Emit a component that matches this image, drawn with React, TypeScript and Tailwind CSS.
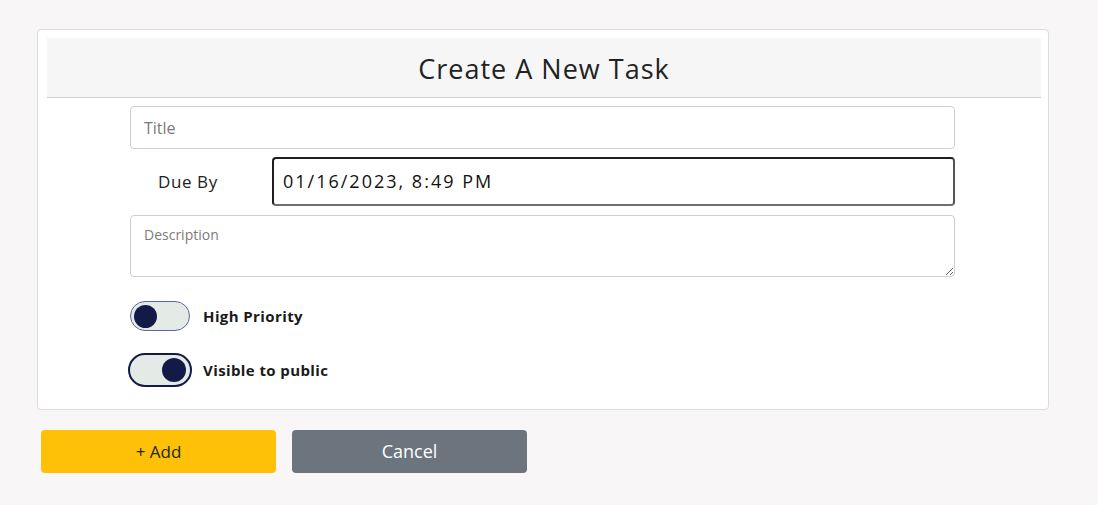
import { useState } from 'react'

export default function App() {
  const [highPriority, setHighPriority] = useState(false)
  const [isPublic, setIsPublic] = useState(true)

  return (
    <div
      className="min-h-[505px] w-full bg-[#f8f6f6] text-[#212529]"
      style={{ fontFamily: "'Open Sans', 'DejaVu Sans', sans-serif" }}
    >
      <div className="pl-[37px] pt-[29px] w-[1049px]">
        {/* Card */}
        <div className="bg-white border border-[#dcdcdc] rounded-[4px] px-[9px] pt-[8px] pb-[22px]">
          <div className="bg-[#f6f6f6] border-b border-[#cfcfcf] h-[60px] flex items-center justify-center pt-[3px] mr-[-2px]">
            <h1 className="text-[27px] tracking-[1px] text-[#222]">Create A New Task</h1>
          </div>

          <div className="pl-[83px] pr-[84px] pt-[8px] flex flex-col">
            <input
              placeholder="Title"
              className="h-[43px] w-full border border-[#cfcfcf] rounded-[4px] px-[13px] text-[16px] placeholder-[#7b7b7b] outline-none"
            />

            <div className="flex items-center mt-[8px]">
              <label className="w-[142px] pl-[28px] text-[17px] tracking-[0.6px] text-[#222]">Due By</label>
              <div className="flex-1 h-[49px] rounded-[4px] border-2 border-t-[#1f1f1f] border-l-[#1f1f1f] border-r-[#555] border-b-[#6f6f6f] flex items-center px-[9px] text-[18px] tracking-[2px] text-[#111]">
                01/16/2023, 8:49 PM
              </div>
            </div>

            <div className="relative mt-[9px]">
              <textarea
                placeholder="Description"
                className="block h-[62px] w-full border border-[#cfcfcf] rounded-[4px] px-[13px] pt-[8px] text-[14px] placeholder-[#7b7b7b] outline-none resize-y"
              />
            </div>

            <div className="flex items-center mt-[24px] gap-[13px]">
              <button
                onClick={() => setHighPriority(!highPriority)}
                className="w-[60px] h-[30px] rounded-full bg-[#e4ebe7] border border-[#5b6895] flex items-center px-[3px]"
              >
                <span className={`w-[23px] h-[23px] rounded-full bg-[#141a47] ${highPriority ? 'ml-auto' : ''}`} />
              </button>
              <span className="text-[15px] font-bold tracking-[0.4px] text-[#1a1a1a]">High Priority</span>
            </div>

            <div className="flex items-center mt-[22px] gap-[11px] ml-[-2px]">
              <button
                onClick={() => setIsPublic(!isPublic)}
                className="w-[64px] h-[34px] rounded-full bg-[#e4ebe7] border-2 border-[#141a47] flex items-center px-[4px]"
              >
                <span className={`w-[24px] h-[24px] rounded-full bg-[#141a47] ${isPublic ? 'ml-auto' : ''}`} />
              </button>
              <span className="text-[15px] font-bold tracking-[0.4px] text-[#1a1a1a]">Visible to public</span>
            </div>
          </div>
        </div>

        {/* Actions */}
        <div className="flex gap-[16px] mt-[20px] ml-[4px]">
          <button className="w-[235px] h-[43px] rounded-[4px] bg-[#ffc107] text-[17px] text-[#212529]">
            + Add
          </button>
          <button className="w-[235px] h-[43px] rounded-[4px] bg-[#6c757d] text-[18px] text-white">
            Cancel
          </button>
        </div>
      </div>
    </div>
  )
}
